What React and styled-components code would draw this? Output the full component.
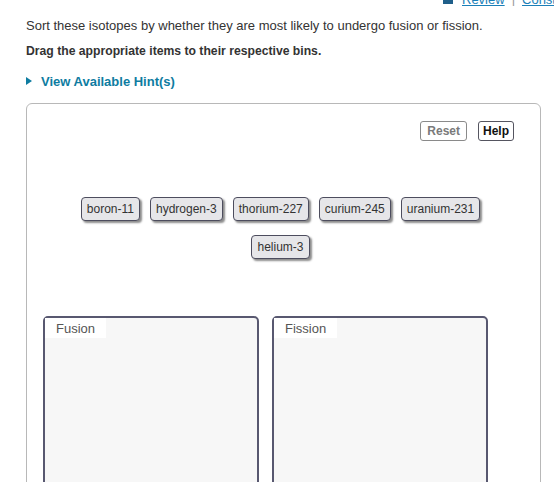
import React from 'react';
import styled, { createGlobalStyle } from 'styled-components';

const Global = createGlobalStyle`
  html, body {
    margin: 0;
    padding: 0;
    background: #ffffff;
  }
  body {
    font-family: 'Liberation Sans', Arial, Helvetica, sans-serif;
    color: #333333;
    overflow: hidden;
  }
`;

const Page = styled.div`
  display: flex;
  flex-direction: column;
  padding: 0 13px 0 26px;
`;

const TopLinks = styled.div`
  display: flex;
  align-items: flex-end;
  height: 6px;
  overflow: hidden;
  margin-right: -13px;
  padding-left: 417px;
  white-space: nowrap;
  font-size: 13px;
  line-height: 13px;
  & > * {
    flex-shrink: 0;
  }
`;

const LinkIcon = styled.span`
  display: inline-block;
  width: 10px;
  height: 9px;
  margin-bottom: 2px;
  background: #1f5f8a;
  margin-right: 9px;
`;

const TopLink = styled.a`
  color: #1a7fb8;
  text-decoration: underline;
`;

const Sep = styled.span`
  color: #999999;
  margin: 0 7px;
`;

const Prompt = styled.p`
  margin: ${(p) => p.$top}px 0 0;
  font-size: ${(p) => (p.$bold ? '12.2px' : '13px')};
  line-height: 16px;
  font-weight: ${(p) => (p.$bold ? 'bold' : 'normal')};
  color: #333333;
`;

const Hint = styled.div`
  display: flex;
  align-items: center;
  margin-top: 14px;
  height: 16px;
  color: #0e7ca1;
  font-size: 13px;
  font-weight: bold;
  cursor: pointer;
`;

const Arrow = styled.span`
  width: 0;
  height: 0;
  border-top: 4.5px solid transparent;
  border-bottom: 4.5px solid transparent;
  border-left: 6px solid #0e7ca1;
  margin-right: 9px;
`;

const Panel = styled.div`
  margin-top: 14px;
  border: 1px solid #b8b8b8;
  border-radius: 6px;
  height: 420px;
  padding: 17px 26px 0 16px;
  display: flex;
  flex-direction: column;
`;

const Toolbar = styled.div`
  display: flex;
  justify-content: flex-end;
  gap: 11px;
`;

const ToolButton = styled.button`
  height: 20px;
  padding: 0 ${(p) => (p.$strong ? 4 : 6)}px;
  background: #ffffff;
  border: 1px solid ${(p) => (p.$strong ? '#555560' : '#8a8a8a')};
  border-radius: 3px;
  font-family: 'Liberation Sans', Arial, sans-serif;
  font-size: 12px;
  font-weight: bold;
  color: ${(p) => (p.$strong ? '#111111' : '#7a7a7a')};
  cursor: pointer;
`;

const Items = styled.div`
  margin-top: 56px;
  display: flex;
  flex-direction: column;
  gap: 14px;
  padding-left: 4px;
`;

const ItemRow = styled.div`
  display: flex;
  justify-content: center;
  gap: 10px;
`;

const Item = styled.div`
  height: 24px;
  padding: 0 5px;
  display: flex;
  align-items: center;
  background: #e6e6e9;
  border: 1.5px solid #4d4d5e;
  border-radius: 4px;
  box-shadow: 2px 2px 2px rgba(0, 0, 0, 0.45);
  font-size: 12px;
  color: #333333;
  box-sizing: border-box;
  cursor: move;
`;

const Bins = styled.div`
  margin-top: 57px;
  display: flex;
  gap: 13px;
`;

const Bin = styled.div`
  width: 216px;
  height: 220px;
  box-sizing: border-box;
  background: #f7f7f7;
  border: 2px solid #585870;
  border-radius: 5px;
  display: flex;
  align-items: flex-start;
`;

const BinLabel = styled.div`
  background: #ffffff;
  padding: 0 11px;
  height: 20px;
  display: flex;
  align-items: center;
  font-size: 13px;
  color: #555555;
`;

const rows = [
  ['boron-11', 'hydrogen-3', 'thorium-227', 'curium-245', 'uranium-231'],
  ['helium-3'],
];
const bins = ['Fusion', 'Fission'];

const App = () => (
  <Page>
    <Global />
    <TopLinks>
      <LinkIcon />
      <TopLink>Review</TopLink>
      <Sep>|</Sep>
      <TopLink>Constants</TopLink>
      <Sep>|</Sep>
      <TopLink>Periodic Table</TopLink>
    </TopLinks>
    <Prompt $top={12}>Sort these isotopes by whether they are most likely to undergo fusion or fission.</Prompt>
    <Prompt $top={9} $bold>Drag the appropriate items to their respective bins.</Prompt>
    <Hint>
      <Arrow />
      View Available Hint(s)
    </Hint>
    <Panel>
      <Toolbar>
        <ToolButton>Reset</ToolButton>
        <ToolButton $strong>Help</ToolButton>
      </Toolbar>
      <Items>
        {rows.map((r, i) => (
          <ItemRow key={i}>
            {r.map((name) => <Item key={name}>{name}</Item>)}
          </ItemRow>
        ))}
      </Items>
      <Bins>
        {bins.map((b) => (
          <Bin key={b}>
            <BinLabel>{b}</BinLabel>
          </Bin>
        ))}
      </Bins>
    </Panel>
  </Page>
);

export default App;
